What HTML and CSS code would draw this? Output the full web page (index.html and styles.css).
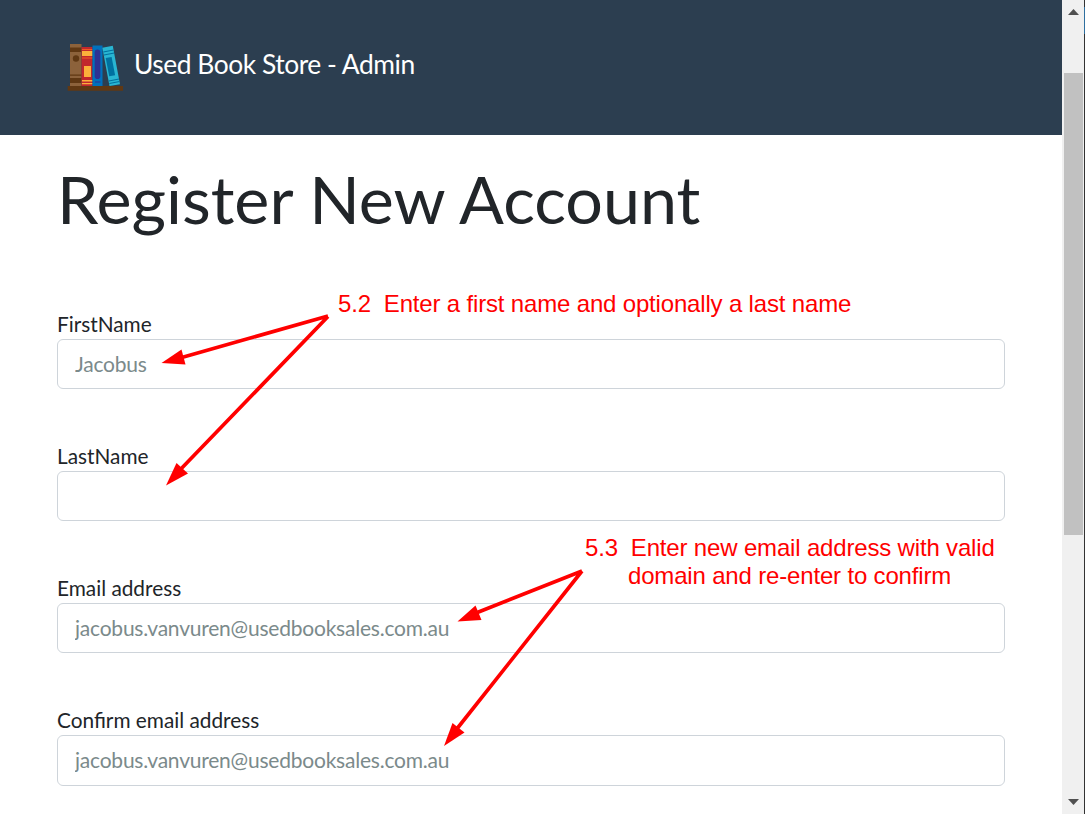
FILE: index.html
```html
<!DOCTYPE html>
<html lang="en">
<head>
<meta charset="utf-8">
<title>Used Book Store - Admin</title>
<link rel="stylesheet" href="styles.css">
</head>
<body>
<div class="window">
  <div class="page">
    <header class="navbar">
      <svg class="logo" width="57" height="50" viewBox="0 0 57 50" aria-hidden="true">
        <path fill="#8c623b" d="M3 2h11.500v42H3z"/>
        <path fill="#603813" d="M3 5.500h11.500V10H3zM3 32.500h11.500v1.200H3zM3 36h11.500v5H3z"/>
        <circle cx="9" cy="16.500" r="3.200" fill="#603813"/>
        <path fill="#c1272d" d="M14.500 5h11v39h-11z"/>
        <path fill="#fbb03b" d="M15 9h10.500v5H15zM17 24h7v11h-7zM15 38h10.500v1.500H15zM15 41h10.500v1.300H15z"/>
        <path fill="#f15a24" d="M15 7h10.500v1H15zM15 15.500h10.500v1H15z"/>
        <path fill="#0071bc" d="M25.500 3.500h10V44h-10z"/>
        <rect x="27.700" y="7.500" width="5.600" height="29.500" rx="2.800" fill="#2e3192"/>
        <path fill="#2e3192" d="M28 39.500h5.500v1H28z"/>
        <path fill="#29b6d2" d="M35.300 5.700 45.800 3.800 53 42.200 42.500 44z"/>
        <path fill="#0071a0" d="m36.200 9.500 10.300-1.900.2 1-10.300 1.900zM36.800 12.500l10.300-1.900.2.900L37 13.400zM41.700 38.500 52 36.600l.2 1-10.300 1.900zM42.200 41l10.300-1.900.2.900-10.300 1.900zM38.700 16l5.900-1.100 3.500 18.300-5.900 1.100z"/>
        <path fill="#603813" d="M.7 44H56v4.700H.7z"/>
      </svg>
      <span class="brand">Used Book Store - Admin</span>
    </header>
    <main class="content">
      <h1 class="title">Register New Account</h1>
      <form class="form">
        <div class="field"><label class="label" for="first">FirstName</label><input class="input" id="first" placeholder="Jacobus"></div>
        <div class="field"><label class="label" for="last">LastName</label><input class="input" id="last"></div>
        <div class="field"><label class="label" for="email">Email address</label><input class="input" id="email" placeholder="jacobus.vanvuren@usedbooksales.com.au"></div>
        <div class="field"><label class="label" for="confirm">Confirm email address</label><input class="input tall" id="confirm" placeholder="jacobus.vanvuren@usedbooksales.com.au"></div>
      </form>
    </main>
  </div>
  <div class="scrollbar">
    <svg class="arrow" width="11" height="6" viewBox="0 0 11 6"><path fill="#505050" d="M0 6 5.500 0 11 6z"/></svg>
    <div class="thumb"></div>
    <svg class="arrow" width="11" height="6" viewBox="0 0 11 6"><path fill="#505050" d="M0 0h11L5.500 6z"/></svg>
  </div>
  <div class="edge"></div>
</div>
<svg class="arrows" width="1085" height="814" viewBox="0 0 1085 814" aria-hidden="true">
  <g stroke="#f00" stroke-width="3.700" fill="none">
    <path d="M328 316 180 358M328 316.500 178 472"/>
    <path d="M582 571 476 613M582 571 456 730"/>
  </g>
  <g fill="#f00">
    <path d="m161.500 363 20-13.500 4 15z"/>
    <path d="m166 485.500 10.500-22.500L188 473.500z"/>
    <path d="m457.500 621.500 18-16 6 14.500z"/>
    <path d="m444 746 8.500-23L464.500 732.500z"/>
  </g>
</svg>
<div class="note note-name">5.2&nbsp; Enter a first name and optionally a last name</div>
<div class="note note-email">5.3&nbsp; Enter new email address with valid<br><span class="note-indent">domain and re-enter to confirm</span></div>
</body>
</html>
```
FILE: styles.css
```css
* { box-sizing: border-box; }
body { margin: 0; width: 1085px; height: 814px; overflow: hidden; position: relative; background: #fff; color: #212529; font-family: Lato, sans-serif; }
.window { display: flex; height: 814px; }
.page { width: 1062px; }
.navbar { height: 135px; padding: 42px 67px 0; display: flex; align-items: flex-start; gap: 10px; background: #2c3e50; color: #fff; }
.logo { flex: none; }
.brand { font-size: 26.4px; line-height: 44px; letter-spacing: -.46px; white-space: nowrap; }
.content { padding: 24px 57px 0; }
.title { margin: 0; font-size: 66.4px; line-height: 79px; font-weight: 400; white-space: nowrap; }
.form { padding-top: 71px; display: flex; flex-direction: column; gap: 52px; }
.field { display: flex; flex-direction: column; }
.label { font-size: 20.8px; line-height: 30px; }
.input { width: 948px; height: 50px; padding: 0 17px 2px; border: 1px solid #ced4da; border-radius: 6px; background: #fff; font: 21px/30px Lato, sans-serif; letter-spacing: -.22px; color: #7b8a8b; outline: none; }
.input.tall { height: 51px; }
.input::placeholder { color: #7b8a8b; opacity: 1; }
.scrollbar { width: 22px; padding: 9px 1px 9px 2px; background: #f0f0f0; display: flex; flex-direction: column; align-items: center; }
.thumb { width: 19px; height: 462px; margin: 58px 0 auto; background: #c1c1c1; }
.arrow { flex: none; }
.edge { width: 1px; background: linear-gradient(#333 7px, #2f6f9f 7px, #2f6f9f 34px, #333 34px); }
.arrows { position: absolute; left: 0; top: 0; }
.note { position: absolute; color: #f00; font: 24px/28px "Liberation Sans", Arial, sans-serif; letter-spacing: -.17px; white-space: nowrap; }
.note-name { left: 338px; top: 290px; }
.note-email { left: 585px; top: 534px; }
.note-indent { padding-left: 43px; }
```
